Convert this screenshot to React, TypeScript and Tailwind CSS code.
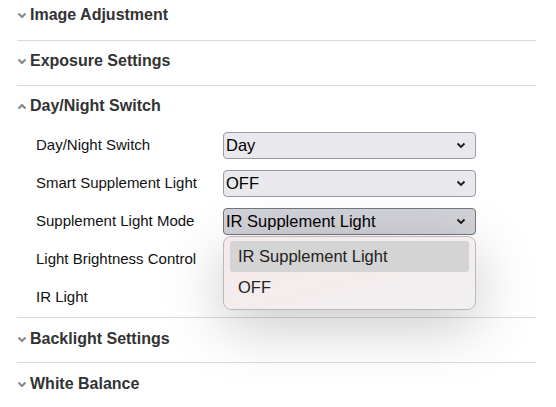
import React from "react";

function Caret({ up = false }: { up?: boolean }) {
  return (
    <svg width="10" height="7" viewBox="0 0 10 7" className="mr-[3px] shrink-0">
      <path
        d={up ? "M1.5 5.5 L5 2 L8.5 5.5" : "M1.5 1.5 L5 5 L8.5 1.5"}
        fill="none"
        stroke="#8a8a8a"
        strokeWidth="2.2"
      />
    </svg>
  );
}

function SelectChevron() {
  return (
    <svg width="10" height="7" viewBox="0 0 10 7" className="shrink-0">
      <path d="M1.5 1.5 L5 5 L8.5 1.5" fill="none" stroke="#1a1a1a" strokeWidth="1.8" />
    </svg>
  );
}

function Header({ title, up = false }: { title: string; up?: boolean }) {
  return (
    <div className="flex h-[40px] items-center text-[16px] font-bold text-[#333]">
      <Caret up={up} />
      <span>{title}</span>
    </div>
  );
}

function Select({ value, active = false }: { value: string; active?: boolean }) {
  return (
    <div
      className={
        "flex h-[27px] w-[253px] items-center justify-between rounded-[4px] border pl-[2px] pr-[9px] text-[16.5px] text-black " +
        (active ? "border-[#74747e] bg-[#d2d2d9]" : "border-[#9a9aa4] bg-[#e9e9ed]")
      }
    >
      <span>{value}</span>
      <SelectChevron />
    </div>
  );
}

function Row({ label, children }: { label: string; children: React.ReactNode }) {
  return (
    <div className="flex h-[38px] items-center">
      <div className="w-[206px] pl-[19px] text-[15px] text-[#111]">{label}</div>
      <div className="relative">{children}</div>
    </div>
  );
}

export default function App() {
  return (
    <div
      className="h-[407px] w-[556px] overflow-hidden bg-white pl-[17px] pr-[20px]"
      style={{ fontFamily: '"Liberation Sans", Arial, sans-serif' }}
    >
      <section className="pb-[10px]">
        <div className="flex h-[30px] items-center text-[16px] font-bold text-[#333]">
          <Caret />
          <span>Image Adjustment</span>
        </div>
      </section>
      <section className="border-t border-[#d9d9d9] pb-[4px]">
        <Header title="Exposure Settings" />
      </section>
      <section className="border-t border-[#d9d9d9] pb-[1px]">
        <Header title="Day/Night Switch" up />
        <Row label="Day/Night Switch">
          <Select value="Day" />
        </Row>
        <Row label="Smart Supplement Light">
          <Select value="OFF" />
        </Row>
        <Row label="Supplement Light Mode">
          <Select value="IR Supplement Light" active />
          <div className="absolute left-0 top-[calc(100%+1px)] z-10 w-[253px] rounded-[8px] border border-[#b9b9bd] bg-gradient-to-br from-[#f7e9ea] to-[#f1f0f1] px-[6px] pb-[6px] pt-[4px] shadow-[0_16px_60px_rgba(0,0,0,0.22)]">
            <div className="flex h-[31px] items-center rounded-[3px] bg-[#d5d4d5] pl-[8px] text-[16.5px] text-[#222]">
              IR Supplement Light
            </div>
            <div className="flex h-[31px] items-center pl-[8px] text-[16.5px] text-[#222]">OFF</div>
          </div>
        </Row>
        <Row label="Light Brightness Control">
          <Select value="" />
        </Row>
        <Row label="IR Light">
          <div className="flex h-[27px] w-[253px] items-center">
            <div className="h-[4px] w-full rounded bg-[#d33]" />
          </div>
        </Row>
      </section>
      <section className="border-t border-[#d9d9d9] pb-[3px]">
        <div className="pt-[1px]">
          <Header title="Backlight Settings" />
        </div>
      </section>
      <section className="border-t border-[#d9d9d9] pb-[4px]">
        <div className="pt-[1px]">
          <Header title="White Balance" />
        </div>
      </section>
    </div>
  );
}
